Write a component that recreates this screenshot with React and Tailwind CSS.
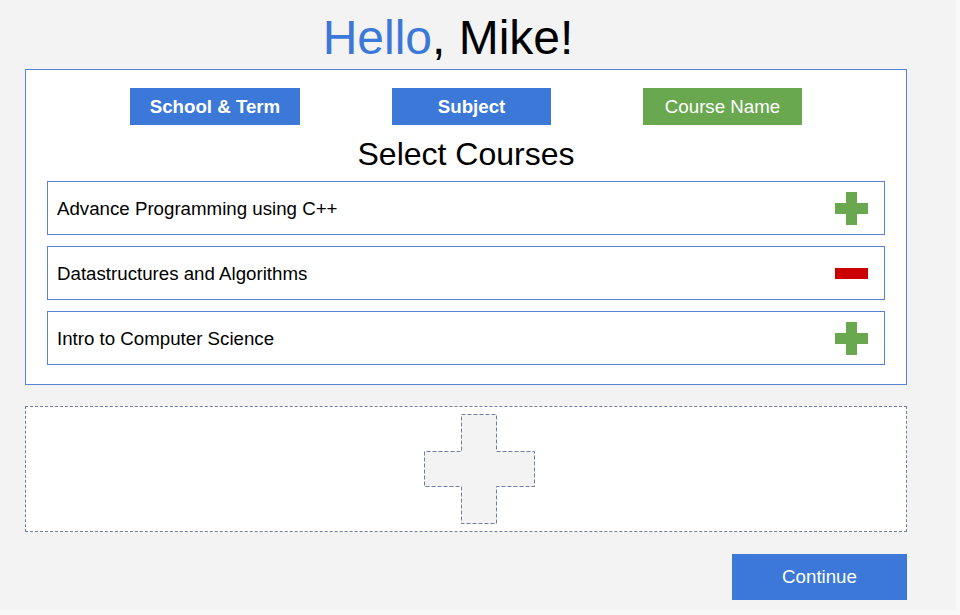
const courses = [
  { name: 'Advance Programming using C++', added: false },
  { name: 'Datastructures and Algorithms', added: true },
  { name: 'Intro to Computer Science', added: false },
]

function PlusIcon() {
  return (
    <svg width="33" height="33" viewBox="0 0 33 33">
      <rect x="11" y="0" width="11" height="33" fill="#6aa84f" />
      <rect x="0" y="11" width="33" height="11" fill="#6aa84f" />
    </svg>
  )
}

function MinusIcon() {
  return (
    <svg width="33" height="33" viewBox="0 0 33 33">
      <rect x="0" y="11" width="33" height="11" fill="#cc0000" />
    </svg>
  )
}

export default function App() {
  return (
    <div className="min-h-[615px] w-full bg-[#f8f8f8]" style={{ fontFamily: '"Liberation Sans", Arial, sans-serif' }}>
      <div className="w-[956px] h-[610px] bg-[#f3f3f3] px-[25px]">
        {/* Greeting */}
        <div className="w-[846px] pt-[10px] mb-[3px] text-center text-[48px] leading-[56px] text-black">
          <span className="text-[#3c78d8]">Hello</span>, Mike!
        </div>

        {/* Course selection panel */}
        <div className="w-[882px] bg-white border border-[#5683d2] pt-[18px] pb-[19px]">
          <div className="flex gap-[92px] pl-[104px]">
            <div className="w-[170px] h-[37px] pt-[2px] bg-[#3c78d8] text-white font-bold text-[18.7px] flex items-center justify-center">
              School &amp; Term
            </div>
            <div className="w-[159px] h-[37px] pt-[2px] bg-[#3c78d8] text-white font-bold text-[18.7px] flex items-center justify-center">
              Subject
            </div>
            <div className="w-[159px] h-[37px] pt-[2px] bg-[#6aa84f] text-white text-[18.7px] flex items-center justify-center">
              Course Name
            </div>
          </div>

          <div className="mt-[11px] mb-[9px] text-center text-[32px] leading-[36px] text-black">
            Select Courses
          </div>

          <div className="flex flex-col gap-[11px] px-[21px]">
            {courses.map((c) => (
              <div
                key={c.name}
                className="h-[54px] border border-[#5683d2] flex items-center justify-between pl-[9px] pr-[16px]"
              >
                <span className="text-[18.7px] text-black pt-[2px]">{c.name}</span>
                {c.added ? <MinusIcon /> : <PlusIcon />}
              </div>
            ))}
          </div>
        </div>

        {/* Drop zone */}
        <div className="w-[882px] h-[126px] mt-[21px] bg-white border border-dashed border-[#6f7f9e] flex items-center justify-center pl-[27px]">
          <svg width="112" height="111" viewBox="0 0 112 111">
            <polygon
              points="37.5,0.5 72.5,0.5 72.5,37.5 110.5,37.5 110.5,72.5 72.5,72.5 72.5,109.5 37.5,109.5 37.5,72.5 0.5,72.5 0.5,37.5 37.5,37.5"
              fill="#f3f3f3"
              stroke="#6f7f9e"
              strokeWidth="1"
              strokeDasharray="4 2"
            />
          </svg>
        </div>

        <div className="w-[882px] flex justify-end mt-[22px]">
          <div className="w-[175px] h-[46px] pt-[1px] bg-[#3c78d8] text-white text-[18.7px] flex items-center justify-center">
            Continue
          </div>
        </div>
      </div>
    </div>
  )
}
